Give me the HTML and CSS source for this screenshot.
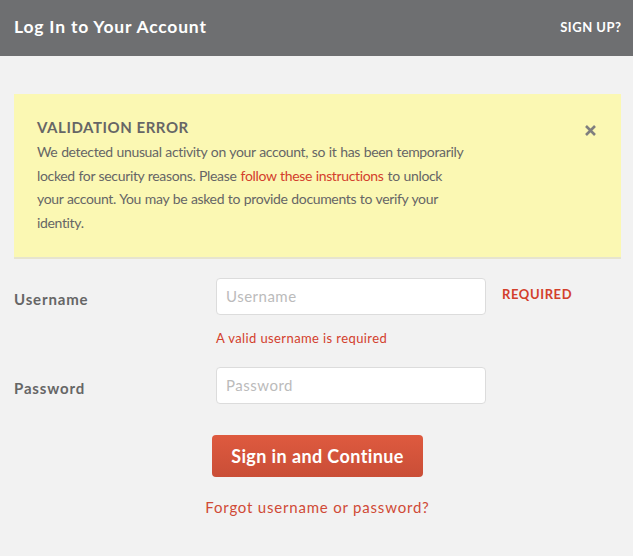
FILE: index.html
```html
<!DOCTYPE html>
<html>
<head>
<meta charset="utf-8">
<title>Log In to Your Account</title>
<link rel="stylesheet" href="styles.css">
</head>
<body>
<header class="topbar">
  <h1 class="topbar-title">Log In to Your Account</h1>
  <a class="topbar-link" href="#">SIGN UP?</a>
</header>
<main class="content">
  <div class="alert">
    <div class="alert-body">
      <h2 class="alert-title">VALIDATION ERROR</h2>
      <p class="alert-text">We detected unusual activity on your account, so it has been temporarily locked for security reasons. Please <a href="#" class="alert-link">follow these instructions</a> to unlock your account. You may be asked to provide documents to verify your identity.</p>
    </div>
    <button class="alert-close" aria-label="Close">
      <svg width="13" height="13" viewBox="0 0 13 13"><path d="M2 2 L11 11 M11 2 L2 11" stroke="#7f7f7f" stroke-width="2.6" stroke-linecap="butt"/></svg>
    </button>
  </div>
  <form class="form">
    <div class="row">
      <label class="label" for="u">Username</label>
      <div class="field">
        <div class="field-line">
          <input class="input" id="u" type="text" placeholder="Username">
          <span class="required">REQUIRED</span>
        </div>
        <div class="error">A valid username is required</div>
      </div>
    </div>
    <div class="row row-pass">
      <label class="label" for="p">Password</label>
      <div class="field">
        <div class="field-line">
          <input class="input" id="p" type="password" placeholder="Password">
        </div>
      </div>
    </div>
    <div class="actions">
      <button class="btn" type="button">Sign in and Continue</button>
      <a class="forgot" href="#">Forgot username or password?</a>
    </div>
  </form>
</main>
</body>
</html>
```
FILE: styles.css
```css
* { box-sizing: border-box; }
html, body { margin: 0; padding: 0; }
body {
  background: #f2f2f2;
  font-family: Lato, "Open Sans", sans-serif;
  color: #666;
}
.topbar {
  height: 56px;
  background: #6e6f71;
  display: flex;
  align-items: center;
  justify-content: space-between;
  padding: 0 12px 3px 14px;
}
.topbar-title {
  margin: 0;
  font-size: 17.5px;
  font-weight: 700;
  color: #fff;
  letter-spacing: 0.8px;
}
.topbar-link {
  color: #fff;
  text-decoration: none;
  font-size: 13px;
  font-weight: 700;
  letter-spacing: 0.5px;
  margin-right: -0.5px;
}
.content {
  padding: 38px 12px 0 14px;
}
.alert {
  background: #fbf8b3;
  border-bottom: 2px solid #e6e4cf;
  display: flex;
  justify-content: space-between;
  padding: 21px 24px 22px 23px;
}
.alert-body { width: 540px; }
.alert-title {
  margin: 0 0 1px;
  font-size: 15px;
  font-weight: 700;
  color: #666;
  line-height: 24px;
  letter-spacing: 0.55px;
}
.alert-text {
  margin: 0;
  font-size: 14px;
  letter-spacing: -0.35px;
  word-spacing: 0.5px;
  line-height: 23.7px;
  color: #666;
  max-width: 432px;
}
.alert-link { color: #d3402c; text-decoration: none; padding: 0 0.4px; }
.alert-close {
  background: none;
  border: 0;
  padding: 0;
  margin-top: 9px;
  width: 13px;
  height: 13px;
  cursor: pointer;
}
.alert-close svg { display: block; }
.form { padding-top: 19px; }
.row { display: flex; }
.row-pass { margin-top: 21px; }
.label {
  width: 202px;
  font-size: 15px;
  font-weight: 700;
  color: #666;
  padding-top: 12px;
  letter-spacing: 0.85px;
}
.field-line { display: flex; align-items: center; }
.input {
  width: 270px;
  height: 37px;
  border: 1px solid #dcdcdc;
  border-radius: 4px;
  background: #fff;
  padding: 0 9px;
  font-family: inherit;
  font-size: 15px;
  letter-spacing: 0.5px;
  color: #444;
  outline: none;
}
.input::placeholder { color: #bbb; }
.required {
  margin-left: 16px;
  margin-top: -4px;
  font-size: 13px;
  font-weight: 700;
  letter-spacing: 0.6px;
  color: #d3402c;
}
.error {
  margin-top: 15px;
  font-size: 13px;
  letter-spacing: 0.4px;
  color: #d3402c;
}
.actions {
  display: flex;
  flex-direction: column;
  align-items: center;
  padding-top: 31px;
}
.btn {
  width: 211px;
  height: 42px;
  border: 0;
  border-radius: 4px;
  background: linear-gradient(#de5a3f, #c94e37);
  color: #fff;
  font-family: inherit;
  font-size: 18px;
  font-weight: 700;
  letter-spacing: 0.4px;
  cursor: pointer;
}
.forgot {
  margin-top: 21px;
  font-size: 15px;
  letter-spacing: 0.8px;
  color: #d04a36;
  text-decoration: none;
}
```
